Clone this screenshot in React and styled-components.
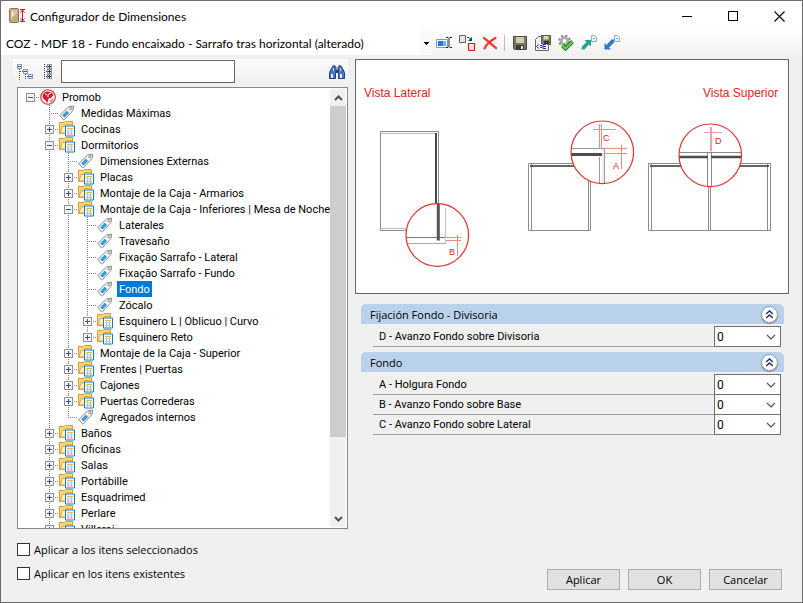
import React, { useState } from "react";
import styled, { createGlobalStyle } from "styled-components";

const tree = [
  {
    label: "Promob",
    icon: "root",
    open: true,
    children: [
      { label: "Medidas Máximas", icon: "tag" },
      { label: "Cocinas" },
      {
        label: "Dormitorios",
        open: true,
        children: [
          { label: "Dimensiones Externas", icon: "tag" },
          { label: "Placas" },
          { label: "Montaje de la Caja - Armarios" },
          {
            label: "Montaje de la Caja - Inferiores | Mesa de Noche",
            open: true,
            children: [
              { label: "Laterales", icon: "tag" },
              { label: "Travesaño", icon: "tag" },
              { label: "Fixação Sarrafo - Lateral", icon: "tag" },
              { label: "Fixação Sarrafo - Fundo", icon: "tag" },
              { label: "Fondo", icon: "tag" },
              { label: "Zócalo", icon: "tag" },
              { label: "Esquinero L | Oblicuo | Curvo" },
              { label: "Esquinero Reto" },
            ],
          },
          { label: "Montaje de la Caja - Superior" },
          { label: "Frentes | Puertas" },
          { label: "Cajones" },
          { label: "Puertas Correderas" },
          { label: "Agregados internos", icon: "tag" },
        ],
      },
      { label: "Baños" },
      { label: "Oficinas" },
      { label: "Salas" },
      { label: "Portábille" },
      { label: "Esquadrimed" },
      { label: "Perlare" },
      { label: "Villeroi" },
    ],
  },
];

const groups = [
  { title: "Fijación Fondo - Divisoria", fields: ["D - Avanzo Fondo sobre Divisoria"] },
  {
    title: "Fondo",
    fields: ["A - Holgura Fondo", "B - Avanzo Fondo sobre Base", "C - Avanzo Fondo sobre Lateral"],
  },
];

function App() {
  const [selected, setSelected] = useState("Fondo");

  return (
    <Window>
      <GlobalStyle />
      <TitleBar>
        <AppIcon />
        <Title>Configurador de Dimensiones</Title>
        <WindowButton aria-label="Minimizar">
          <svg width="11" height="11" shapeRendering="crispEdges">
            <path d="M0 5.5h10" stroke="#000" />
          </svg>
        </WindowButton>
        <WindowButton aria-label="Maximizar">
          <svg width="11" height="11" shapeRendering="crispEdges">
            <path d="M.5 .5h9v9h-9z" stroke="#000" fill="none" />
          </svg>
        </WindowButton>
        <WindowButton aria-label="Cerrar">
          <svg width="11" height="11">
            <path d="M.5 .5l10 10M10.5 .5l-10 10" stroke="#000" strokeWidth="1.1" />
          </svg>
        </WindowButton>
      </TitleBar>

      <Toolbar>
        <PresetBox>
          <PresetSelect aria-label="Configuración">
            <option>COZ - MDF 18 - Fundo encaixado - Sarrafo tras horizontal (alterado)</option>
          </PresetSelect>
          <PresetArrow>
            <svg width="5" height="3" shapeRendering="crispEdges">
              <path d="M0 0h5v1H0zM1 1h3v1H1zM2 2h1v1H2z" />
            </svg>
          </PresetArrow>
        </PresetBox>
        <ToolButton aria-label="Renombrar">
          <RenameIcon />
        </ToolButton>
        <ToolButton aria-label="Duplicar">
          <CopyIcon />
        </ToolButton>
        <ToolButton aria-label="Eliminar">
          <DeleteIcon />
        </ToolButton>
        <Separator />
        <ToolButton aria-label="Guardar">
          <SaveIcon />
        </ToolButton>
        <ToolButton aria-label="Guardar como">
          <SaveAsIcon />
        </ToolButton>
        <ToolButton aria-label="Validar">
          <GearIcon />
        </ToolButton>
        <ToolButton aria-label="Exportar">
          <ExportIcon />
        </ToolButton>
        <ToolButton aria-label="Importar">
          <ImportIcon />
        </ToolButton>
      </Toolbar>

      <Body>
        <LeftPane>
          <SearchBar>
            <ToolButton aria-label="Expandir">
              <ExpandIcon />
            </ToolButton>
            <ToolButton aria-label="Contraer">
              <CollapseIcon />
            </ToolButton>
            <SearchInput aria-label="Buscar" />
            <FindButton aria-label="Buscar siguiente">
              <FindIcon />
            </FindButton>
          </SearchBar>
          <TreeBox>
            <TreeList>
              <Branch nodes={tree} rails={[]} selected={selected} onSelect={setSelected} />
            </TreeList>
            <Scrollbar>
              <ScrollButton aria-label="Subir">
                <svg width="9" height="6">
                  <path d="M1 5l3.500-3.500L8 5" stroke="#505050" strokeWidth="2" fill="none" />
                </svg>
              </ScrollButton>
              <ScrollTrack>
                <ScrollThumb />
              </ScrollTrack>
              <ScrollButton aria-label="Bajar">
                <svg width="9" height="6">
                  <path d="M1 1l3.500 3.500L8 1" stroke="#505050" strokeWidth="2" fill="none" />
                </svg>
              </ScrollButton>
            </Scrollbar>
          </TreeBox>
        </LeftPane>

        <RightPane>
          <Preview>
            <Diagram />
          </Preview>
          {groups.map((group) => (
            <Group key={group.title} {...group} />
          ))}
        </RightPane>
      </Body>

      <Footer>
        <Checks>
          <CheckLabel>
            <CheckInput type="checkbox" />
            Aplicar a los itens seleccionados
          </CheckLabel>
          <CheckLabel>
            <CheckInput type="checkbox" />
            Aplicar en los itens existentes
          </CheckLabel>
        </Checks>
        <Actions>
          <ActionButton>Aplicar</ActionButton>
          <ActionButton>OK</ActionButton>
          <ActionButton>Cancelar</ActionButton>
        </Actions>
      </Footer>
    </Window>
  );
}

export default App;

function Branch({ nodes, rails, selected, onSelect }) {
  return nodes.map((node, index) => (
    <Node
      key={node.label}
      node={node}
      rails={rails}
      last={index === nodes.length - 1}
      selected={selected}
      onSelect={onSelect}
    />
  ));
}

function Node({ node, rails, last, selected, onSelect }) {
  const [isOpen, setIsOpen] = useState(Boolean(node.open));
  const isRoot = node.icon === "root";
  const isTag = node.icon === "tag";

  return (
    <>
      <TreeRow>
        {rails.map((on, i) => (
          <Rail key={i} $line={on ? "full" : "none"} />
        ))}
        <Rail $line={isRoot ? "none" : last ? "half" : "full"} $branch>
          {!isTag && (
            <Expander
              aria-label={(isOpen ? "Contraer " : "Expandir ") + node.label}
              onClick={() => setIsOpen(!isOpen)}
            >
              <svg width="9" height="9" shapeRendering="crispEdges">
                <path d="M.5 .5h8v8h-8z" fill="#f4f4f4" stroke="#919191" />
                <path d={isOpen ? "M2 4.500h5" : "M2 4.500h5M4.500 2v5"} stroke="#3a55a0" />
              </svg>
            </Expander>
          )}
        </Rail>
        <NodeIcon>{isRoot ? <RootIcon /> : isTag ? <TagIcon /> : <FolderIcon />}</NodeIcon>
        <NodeLabel $selected={node.label === selected} onClick={() => onSelect(node.label)}>
          {node.label}
        </NodeLabel>
      </TreeRow>
      {isOpen && node.children && (
        <Branch
          nodes={node.children}
          rails={[...rails, !isRoot && !last]}
          selected={selected}
          onSelect={onSelect}
        />
      )}
    </>
  );
}

function Group({ title, fields }) {
  const [isOpen, setIsOpen] = useState(true);

  return (
    <GroupBox>
      <GroupHeader>
        {title}
        <GroupToggle aria-label={"Mostrar " + title} onClick={() => setIsOpen(!isOpen)}>
          <svg width="9" height="9">
            <path d="M1.200 4L4.500 1L7.800 4M1.200 8L4.500 5L7.800 8" stroke="#1d2f63" strokeWidth="1.400" fill="none" />
          </svg>
        </GroupToggle>
      </GroupHeader>
      {isOpen && (
        <FieldList>
          {fields.map((field) => (
            <FieldRow key={field}>
              <FieldName>{field}</FieldName>
              <ValueBox>
                <ValueSelect>
                  <option>0</option>
                </ValueSelect>
                <ValueArrow>
                  <svg width="10" height="6">
                    <path d="M1 1l4 4l4-4" stroke="#505050" strokeWidth="1.100" fill="none" />
                  </svg>
                </ValueArrow>
              </ValueBox>
            </FieldRow>
          ))}
        </FieldList>
      )}
    </GroupBox>
  );
}

function Diagram() {
  return (
    <svg viewBox="0 0 432 233" width="100%" fontFamily="Liberation Sans, Arial, sans-serif" fill="none">
      <g fill="#e8211d" fontSize="12">
        <text x="8" y="37">Vista Lateral</text>
        <text x="347" y="37">Vista Superior</text>
      </g>

      {/* side view */}
      <g stroke="#8c8c8c">
        <path d="M24.500 71.500H82.500V150" />
        <path d="M24.500 71.500V170.500H60" />
        <path d="M24.500 73.500H80M24.500 168.500H60" stroke="#bdbdbd" />
      </g>
      <path d="M80 73V150" stroke="#4a4a4a" strokeWidth="2" />
      <circle cx="81.300" cy="175" r="31.300" fill="#fff" />
      <path d="M50.500 177.500H89" stroke="#777" />
      <path d="M89.500 148V183" stroke="#c4c4c4" />
      <path d="M51.500 183.500H90" stroke="#aaa" />
      <path d="M82.300 144V180.500" stroke="#555" strokeWidth="3" />
      <path d="M90 177.500H105M90 180.500H105M101.500 175V196" stroke="#ef8a88" />
      <circle cx="81.300" cy="175" r="31.300" stroke="#e23230" strokeWidth="1.200" />
      <text x="93" y="195" fontSize="9" fill="#e8211d">B</text>

      {/* top view, single module */}
      <path d="M173 103.500H234.500V170.500H172.500V103.500M175.500 104V170M232.500 104V170" stroke="#8c8c8c" />
      <path d="M174 106H220" stroke="#333" strokeWidth="1.400" />
      <circle cx="246.300" cy="92.300" r="31.300" fill="#fff" />
      <path d="M215 88.500H248.500V123M243.500 97V123.500" stroke="#999" />
      <path d="M247 89V123" stroke="#ddd" />
      <path d="M215 94.500H246" stroke="#4d4d4d" strokeWidth="3" />
      <path d="M243.500 64V88M245.500 64V88M237 69.500H260M249 88.500H271M249 93.500H271M265.500 85V109" stroke="#ef8a88" />
      <circle cx="246.300" cy="92.300" r="31.300" stroke="#e23230" strokeWidth="1.200" />
      <g fontSize="9" fill="#e8211d">
        <text x="247" y="81">C</text>
        <text x="257" y="109">A</text>
      </g>

      {/* top view, two modules */}
      <path d="M292.500 103.500H414.500V170.500H292.500V103.500M295.500 104V170M411.500 104V170M352.500 120V170M354.500 120V170" stroke="#8c8c8c" />
      <path d="M294 106H413" stroke="#333" strokeWidth="1.400" />
      <circle cx="354.300" cy="95.300" r="31.300" fill="#fff" />
      <path d="M323.500 92.500H385M351.500 92V126M355.500 92V126" stroke="#888" />
      <path d="M323 97H352M355 97H385.500" stroke="#4d4d4d" strokeWidth="2.600" />
      <path d="M354.500 67V91M355.500 67V91M348 72.500H366" stroke="#efa09e" />
      <circle cx="354.300" cy="95.300" r="31.300" stroke="#e23230" strokeWidth="1.200" />
      <text x="359" y="84" fontSize="9" fill="#e8211d">D</text>
    </svg>
  );
}

function AppIcon() {
  return (
    <svg width="17" height="16" viewBox="0 0 17 16">
      <rect x=".5" y=".5" width="9" height="14" rx="1" fill="#c9a67c" stroke="#8f7350" />
      <path d="M2 2h6v3L2 12z" fill="#dcc3a0" />
      <path d="M3.500 4v4" stroke="#f2f2f2" strokeWidth="1.600" />
      <path d="M11 1.500h5M11 13.500h5M13.500 2v11M11.500 4.500l2-2.500l2 2.500M11.500 10.500l2 2.500l2-2.500" stroke="#d8102c" fill="none" />
    </svg>
  );
}

function RenameIcon() {
  return (
    <svg width="16" height="16" viewBox="0 0 16 16">
      <path d="M.5 4.500h11v8h-11z" fill="#fff" stroke="#8296b5" />
      <path d="M2 6h8v5H2z" fill="#7db0ee" />
      <path d="M2 6h5v5H2z" fill="#2f74d8" />
      <path d="M10 2.500h2l1 1l1-1h2M13 3.500v8M10 12.500h2l1-1l1 1h2" stroke="#222" fill="none" />
    </svg>
  );
}

function CopyIcon() {
  return (
    <svg width="16" height="16" viewBox="0 0 16 16">
      <path d="M.5 .5h6v7h-6z" fill="#e6e6e6" stroke="#6c5c60" />
      <path d="M9.500 8.500h6v7h-6z" fill="#f5e4e6" stroke="#e00000" />
      <path d="M8 2.500h2l2 2" stroke="#16357f" fill="none" />
      <path d="M13 2v4H9z" fill="#16357f" />
    </svg>
  );
}

function DeleteIcon() {
  return (
    <svg width="16" height="16" viewBox="0 0 16 16">
      <path d="M2 3C5 5 10 10 14 13M13.500 3C9 5.500 4 10 2.500 13.500" stroke="#f03a30" strokeWidth="2.200" strokeLinecap="round" fill="none" />
    </svg>
  );
}

function SaveIcon() {
  return (
    <svg width="16" height="16" viewBox="0 0 16 16">
      <path d="M1.500 1.500h13v13h-12l-1-1z" fill="#77776b" stroke="#4a4a44" />
      <path d="M4 2h8v6H4z" fill="#d2cfa8" />
      <path d="M4 10h8v4.500H4z" fill="#3a3a36" />
      <path d="M9 11h2v3H9z" fill="#e8e8e0" />
    </svg>
  );
}

function SaveAsIcon() {
  return (
    <svg width="16" height="16" viewBox="0 0 16 16">
      <path d="M.5 4.500l3-3h10v14h-13z" fill="#f2f2f2" stroke="#666" />
      <path d="M6.500 .5h9v9h-9z" fill="#77776b" stroke="#5c5c52" />
      <path d="M8.500 1h5v3.500h-5z" fill="#dad7ae" />
      <path d="M9 6h5v3H9z" fill="#3a3a36" />
      <path d="M1 9h11v5H1z" fill="#fff" />
      <path d="M4 9.500L1.500 11.500L4 13.500M11 9.500h-3v4h3M8 11.500h3M5 10.500h2M5 12.500h2" stroke="#1530d8" fill="none" />
    </svg>
  );
}

function GearIcon() {
  return (
    <svg width="16" height="16" viewBox="0 0 16 16">
      <circle cx="6.500" cy="6" r="5.200" fill="none" stroke="#8a8a8a" strokeWidth="2.200" strokeDasharray="2.200 1.880" />
      <circle cx="6.500" cy="6" r="3.200" fill="#fff" stroke="#a8a8a8" strokeWidth="2.600" />
      <path d="M4.500 10.500L7.500 13.500L14.500 6.500" stroke="#1b7a1b" strokeWidth="4" fill="none" />
      <path d="M4.500 10.500L7.500 13.500L14.500 6.500" stroke="#5fd04e" strokeWidth="2" fill="none" />
    </svg>
  );
}

function MiniPage() {
  return (
    <>
      <path d="M10.500 .5h3l2 2v4h-5z" fill="#eaf3fd" stroke="#86aedb" />
      <path d="M12 3.500h2" stroke="#86aedb" />
    </>
  );
}

function ExportIcon() {
  return (
    <svg width="16" height="16" viewBox="0 0 16 16">
      <MiniPage />
      <path d="M3.500 5H10v6.500L8 9.500L3.500 14.500H.5L1 11.500L5.500 7z" fill="#2ca287" />
    </svg>
  );
}

function ImportIcon() {
  return (
    <svg width="16" height="16" viewBox="0 0 16 16">
      <MiniPage />
      <path d="M.5 8v6.500H7L5 12.500L10 7.500V4.500H7.500L2.500 10z" fill="#3178cc" />
    </svg>
  );
}

function ExpandIcon() {
  return (
    <svg width="16" height="16" viewBox="0 0 16 16" shapeRendering="crispEdges">
      <path d="M2.500 5v11M8.500 10v6M5 7.500h2M3 7.500h1M10 12.500h1" stroke="#555" strokeDasharray="1 1" />
      <path d="M.5 .5h4v4h-4zM6.500 5.500h4v4h-4zM11.500 10.500h4v4h-4z" fill="#fff" stroke="#8795ac" />
      <path d="M1 2.500h3M7 7.500h3M12 12.500h3" stroke="#30548e" />
    </svg>
  );
}

function CollapseIcon() {
  return (
    <svg width="16" height="16" viewBox="0 0 16 16" shapeRendering="crispEdges">
      <path d="M4.500 0v16M6 2.500h2M6 7.500h2M6 12.500h2" stroke="#333" strokeDasharray="1 1" />
      <path d="M7.500 .5h4v4h-4zM7.500 5.500h4v4h-4zM7.500 10.500h4v4h-4z" fill="#fff" stroke="#8795ac" />
      <path d="M8 2.500h3M8 7.500h3M8 12.500h3M9.500 1v3M9.500 6v3M9.500 11v3" stroke="#333" />
    </svg>
  );
}

function FindIcon() {
  return (
    <svg width="16" height="14" viewBox="0 0 16 14">
      <path d="M3.500 1.500l2-1l1.500 2v3l-.5 2v6h-6v-6l2-4zM12.500 1.500l-2-1l-1.500 2v3l.5 2v6h6v-6l-2-4z" fill="#4a74c4" stroke="#1f3d86" />
      <path d="M7 5h2v3H7z" fill="#1f3d86" />
      <path d="M2 9h2v4H2zM11 9h2v4h-2z" fill="#e4edfc" />
      <path d="M4 3h1v3H4zM11 3h1v3h-1z" fill="#c4d6f5" />
    </svg>
  );
}

function RootIcon() {
  return (
    <svg width="16" height="16" viewBox="0 0 16 16">
      <circle cx="8" cy="8" r="7.300" fill="#fff" stroke="#d61f2c" strokeWidth="1.100" />
      <path d="M7 2.500C3 3 1.800 6.500 3 9.500L5 11L7.500 14L8.500 9.500L11 9L13.500 6C12.500 3.500 10 2.300 7 2.500z" fill="#d61f2c" />
      <path d="M8 8V5.500L11 4M5 4.500L7 6" stroke="#fff" fill="none" />
      <path d="M10 13l3-3" stroke="#e0626a" strokeWidth="1.500" />
    </svg>
  );
}

function TagIcon() {
  return (
    <svg width="16" height="16" viewBox="0 0 16 16">
      <path d="M.8 10.500L9.500 2L14.500 1L14 5.500L5.500 14.500L4.500 15z" fill="#f4f4f4" stroke="#8a8a8a" strokeLinejoin="round" />
      <circle cx="11.900" cy="3.700" r="1.200" fill="#fff" stroke="#777" strokeWidth=".8" />
      <path d="M3.300 10.200L7.800 5.700L10 7.900L5.500 12.400z" fill="#1e88d0" />
      <path d="M4.800 9L8.300 11M6.300 7.500L9.800 9.500" stroke="#8fd0f7" strokeWidth=".6" />
    </svg>
  );
}

function FolderIcon() {
  return (
    <svg width="16" height="16" viewBox="0 0 16 16">
      <path d="M.5 12.500V1.500h5l1-1h7v12z" fill="#fbd877" stroke="#d79a3c" />
      <path d="M1 12l2-6.500h3l1-2h6.500V12z" stroke="#e0a84c" fill="#fdeeb8" />
      <path d="M6.500 5h9v10h-9z" fill="#fff" stroke="#1878b8" />
      <path d="M8 7.500h6" stroke="#f0b93c" />
      <path d="M8 10h6M8 12.500h6M9.500 8v6M12.500 8v6" stroke="#a5c8e6" />
    </svg>
  );
}

const GlobalStyle = createGlobalStyle`
  * {
    box-sizing: border-box;
  }
  body {
    margin: 0;
    font-family: "Open Sans", "Segoe UI", sans-serif;
    font-size: 11px;
    color: #000;
  }
  button,
  select,
  input {
    font: inherit;
    color: inherit;
    margin: 0;
    padding: 0;
    border-radius: 0;
  }
  button {
    border: none;
    background: none;
  }
  svg {
    display: block;
    flex: none;
  }
`;

const Window = styled.div`
  display: flex;
  flex-direction: column;
  height: 100vh;
  background: #f0f0f0;
  border: 1px solid #6b6b6b;
`;

const TitleBar = styled.header`
  display: flex;
  align-items: center;
  height: 30px;
  padding-left: 8px;
  background: #fff;
`;

const Title = styled.h1`
  flex: 1;
  margin: 0;
  padding-left: 4px;
  font-family: Lato, "Segoe UI", sans-serif;
  font-size: 12px;
  font-weight: normal;
`;

const WindowButton = styled.button`
  display: flex;
  align-items: center;
  justify-content: center;
  width: 46px;
  height: 30px;
`;

const Toolbar = styled.div`
  display: flex;
  align-items: flex-start;
  height: 26px;
  background: linear-gradient(#fdfdfd, #f0f0f0);
`;

const PresetBox = styled.div`
  display: grid;
  grid-template-columns: 1fr 12px;
  width: 431px;
  height: 24px;
  background: #fff;
`;

const PresetSelect = styled.select`
  grid-area: 1 / 1 / 2 / 3;
  appearance: none;
  border: none;
  background: none;
  padding-left: 5px;
  font-family: Lato, "Segoe UI", sans-serif;
  font-size: 12px;
`;

const PresetArrow = styled.span`
  grid-area: 1 / 2;
  display: flex;
  align-items: center;
  justify-content: center;
  background: #f9f9f9;
  pointer-events: none;
`;

const ToolButton = styled.button`
  display: flex;
  align-items: center;
  justify-content: center;
  width: 23px;
  height: 24px;
`;

const Separator = styled.div`
  width: 1px;
  height: 16px;
  margin: 4px 3px;
  background: #bdbdbd;
`;

const Body = styled.main`
  display: flex;
  flex: 1;
  min-height: 0;
`;

const LeftPane = styled.section`
  display: flex;
  flex-direction: column;
  flex: 0 0 347px;
  min-width: 0;
`;

const SearchBar = styled.div`
  display: flex;
  align-items: center;
  height: 25px;
  margin: 2px 0 3px 12px;
  background: linear-gradient(#fbfbfb, #f0f0f0);
`;

const SearchInput = styled.input`
  width: 174px;
  height: 23px;
  margin-left: 2px;
  border: 1px solid #646464;
  background: #fff;
`;

const FindButton = styled(ToolButton)`
  margin-left: auto;
`;

const TreeBox = styled.div`
  display: flex;
  flex: 1;
  min-height: 0;
  margin-left: 16px;
  border: 1px solid #828790;
  background: #fff;
`;

const TreeList = styled.div`
  flex: 1;
  min-width: 0;
  overflow: hidden;
  padding: 1px 0 0 3px;
  font-family: Roboto, "Liberation Sans", sans-serif;
`;

const TreeRow = styled.div`
  display: flex;
  height: 16px;
`;

const railLine = "repeating-linear-gradient(#808080 0 1px, transparent 1px 2px)";
const railBranch = "repeating-linear-gradient(90deg, #808080 0 1px, transparent 1px 2px)";

const Rail = styled.span`
  flex: none;
  width: 19px;
  height: 16px;
  padding: 4px 0 0 5px;
  background-image: ${railLine}, ${railBranch};
  background-repeat: no-repeat;
  background-position: 9px 0, 9px 8px;
  background-size:
    ${(props) => (props.$line === "none" ? "0 0" : props.$line === "half" ? "1px 8px" : "1px 16px")},
    ${(props) => (props.$branch ? "10px 1px" : "0 0")};
`;

const Expander = styled.button`
  display: block;
  width: 9px;
  height: 9px;
`;

const NodeIcon = styled.span`
  flex: none;
  width: 20px;
`;

const NodeLabel = styled.button`
  padding: 2px 2px 0;
  line-height: 14px;
  white-space: nowrap;
  background: ${(props) => (props.$selected ? "#0078d7" : "transparent")};
  color: ${(props) => (props.$selected ? "#fff" : "#000")};
`;

const Scrollbar = styled.div`
  display: flex;
  flex-direction: column;
  width: 16px;
  margin: 1px 1px 1px 0;
  background: #f0f0f0;
`;

const ScrollButton = styled.button`
  display: flex;
  align-items: center;
  justify-content: center;
  height: 17px;
`;

const ScrollTrack = styled.div`
  flex: 1;
`;

const ScrollThumb = styled.div`
  height: 82%;
  background: #cdcdcd;
`;

const RightPane = styled.section`
  flex: 1;
  min-width: 0;
  padding: 2px 13px 0 7px;
`;

const Preview = styled.div`
  margin-bottom: 10px;
  border: 1px solid #646464;
  background: #fff;
`;

const GroupBox = styled.section`
  margin: 0 5px 5px 6px;
`;

const GroupHeader = styled.h2`
  display: flex;
  align-items: center;
  justify-content: space-between;
  height: 20px;
  margin: 0;
  padding: 0 6px 0 9px;
  border-radius: 5px 5px 0 0;
  background: #b9d1ea;
  font-size: 11px;
  font-weight: normal;
`;

const GroupToggle = styled.button`
  display: flex;
  align-items: center;
  justify-content: center;
  width: 17px;
  height: 17px;
  border: 1px solid #8f9bb0;
  border-radius: 50%;
  background: #fff;
  box-shadow: 0 1px 1px #7f8fa8;
`;

const FieldList = styled.div`
  margin: 3px 3px 0 12px;
`;

const FieldRow = styled.label`
  display: flex;
  height: 20px;
  border-bottom: 1px solid #a0a0a0;
  font-family: Roboto, "Liberation Sans", sans-serif;
`;

const FieldName = styled.span`
  flex: 1;
  padding-left: 6px;
  line-height: 20px;
`;

const ValueBox = styled.span`
  display: grid;
  grid-template-columns: 1fr 18px;
  width: 67px;
  height: 21px;
  margin-top: -1px;
  border: 1px solid #707070;
  background: #fff;
`;

const ValueSelect = styled.select`
  grid-area: 1 / 1 / 2 / 3;
  appearance: none;
  border: none;
  background: none;
  padding-left: 2px;
  font-size: 12px;
`;

const ValueArrow = styled.span`
  grid-area: 1 / 2;
  display: flex;
  align-items: center;
  justify-content: center;
  pointer-events: none;
`;

const Footer = styled.footer`
  display: flex;
  align-items: flex-end;
  justify-content: space-between;
  padding: 12px 20px 12px 16px;
`;

const Checks = styled.div`
  display: flex;
  flex-direction: column;
  gap: 8px;
  padding-bottom: 9px;
`;

const CheckLabel = styled.label`
  display: flex;
  align-items: center;
  gap: 4px;
  height: 16px;
`;

const CheckInput = styled.input`
  appearance: none;
  width: 13px;
  height: 13px;
  border: 1px solid #333;
  background: #fff;
  &:checked {
    box-shadow: inset 0 0 0 2px #fff;
    background: #333;
  }
`;

const Actions = styled.div`
  display: flex;
  gap: 8px;
`;

const ActionButton = styled.button`
  width: 73px;
  height: 21px;
  border: 1px solid #adadad;
  background: #e1e1e1;
  &:hover {
    border-color: #0078d7;
    background: #e5f1fb;
  }
`;
